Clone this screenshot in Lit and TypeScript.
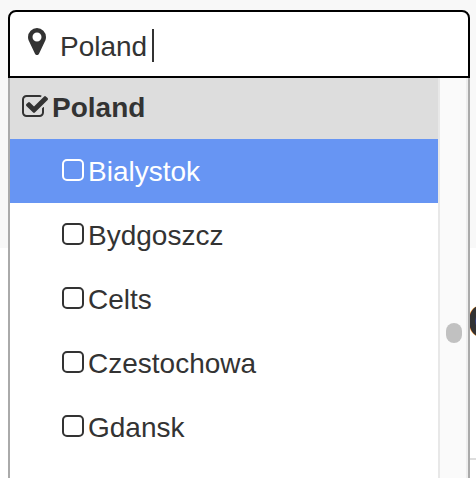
import { LitElement, html, css, svg } from "lit";
import { customElement, state } from "lit/decorators.js";

interface Place {
  name: string;
  active?: boolean;
}

const pinIcon = svg`<path d="M1152 640q0-106-75-181t-181-75-181 75-75 181 75 181 181 75 181-75 75-181zm256 0q0 109-33 179l-364 774q-16 33-47.5 52t-67.5 19-67.5-19-46.5-52l-365-774q-33-70-33-179 0-212 150-362t362-150 362 150 150 362z"/>`;

const checkIcon = svg`<path d="M1472 930v318q0 119-84.5 203.5t-203.5 84.5h-832q-119 0-203.5-84.5t-84.5-203.5v-832q0-119 84.5-203.5t203.5-84.5h832q63 0 117 25 15 7 18 23 3 17-9 29l-49 49q-10 10-23 10-3 0-9-2-23-6-45-6h-832q-66 0-113 47t-47 113v832q0 66 47 113t113 47h832q66 0 113-47t47-113v-254q0-13 9-22l64-64q10-10 23-10 6 0 12 3 20 8 20 29zm231-489l-814 814q-24 24-57 24t-57-24l-430-430q-24-24-24-57t24-57l110-110q24-24 57-24t57 24l263 263 647-647q24-24 57-24t57 24l110 110q24 24 24 57t-24 57z"/>`;

@customElement("app-root")
export class AppRoot extends LitElement {
  static styles = css`
    :host {
      display: block;
      position: relative;
      height: 100vh;
      overflow: hidden;
      background: #fff;
      color: #333;
      font: 28px/32px "Liberation Sans", Arial, sans-serif;
    }
    * {
      box-sizing: border-box;
    }
    .band {
      height: 248px;
      background: #f8f8f8;
    }
    /* page content that continues to the right, behind the picker */
    .behind {
      display: flex;
      flex-direction: column;
      align-items: flex-end;
      height: 212px;
      margin-left: 8px;
      padding-top: 48px;
      border-bottom: 2px solid #ddd;
    }
    .heading {
      width: 9px;
      margin: 0;
      font-size: 48px;
      line-height: 52px;
      font-weight: bold;
      white-space: nowrap;
    }
    .picker {
      position: absolute;
      inset: 10px 6px 0 8px;
      display: flex;
      flex-direction: column;
    }
    .field {
      display: flex;
      align-items: center;
      flex: none;
      height: 68px;
      padding: 6px 18px 0;
      border: 2px solid #000;
      border-radius: 8px 8px 0 0;
      background: #fff;
    }
    .pin {
      width: 18px;
      height: 27px;
      margin: 0 14px 12px 0;
      fill: #333;
    }
    .query {
      field-sizing: content;
      height: 36px;
      padding: 0;
      border: 0;
      outline: 0;
      background: none;
      color: inherit;
      font: inherit;
      caret-color: transparent;
    }
    .caret {
      width: 2px;
      height: 33px;
      margin: 0 0 4px 5px;
      background: #333;
    }
    .menu {
      display: flex;
      flex: 1;
      min-height: 0;
      border: solid #aaa;
      border-width: 0 2px;
      background: #fff;
    }
    .list {
      flex: 1;
      min-width: 0;
      margin: 0;
      padding: 0;
      list-style: none;
    }
    .row {
      display: flex;
      align-items: center;
      height: 64px;
      padding: 2px 0 0 52px;
    }
    .row.group {
      height: 61px;
      padding: 0 0 1px 12px;
      background: #ddd;
      font-weight: bold;
    }
    .row.active {
      background: #6795f3;
      color: #fff;
    }
    .box {
      appearance: none;
      width: 22px;
      height: 22px;
      margin: 0 4px 4px 0;
      border: 2px solid currentColor;
      border-radius: 5px;
      color: inherit;
    }
    .check {
      position: relative;
      display: flex;
      width: 26px;
      height: 22px;
      margin: 0 4px 4px 0;
    }
    .check svg {
      width: 26px;
      height: 22px;
      fill: currentColor;
    }
    .check input {
      position: absolute;
      inset: 0;
      width: 100%;
      height: 100%;
      margin: 0;
      opacity: 0;
    }
    .track {
      display: flex;
      align-items: center;
      justify-content: center;
      width: 30px;
      padding: 110px 0 0 2px;
      border: solid #e8e8e8;
      border-width: 0 2px;
      border-right-color: #eee;
      background: #fafafa;
    }
    .thumb {
      width: 16px;
      height: 20px;
      border-radius: 8px;
      background: #c1c1c1;
    }
  `;

  @state() private places: Place[] = [
    { name: "Bialystok", active: true },
    { name: "Bydgoszcz" },
    { name: "Celts" },
    { name: "Czestochowa" },
    { name: "Gdansk" },
  ];

  render() {
    return html`
      <div class="band"></div>
      <div class="behind"><h2 class="heading">C</h2></div>
      <div class="picker">
        <div class="field">
          <svg class="pin" viewBox="384 128 1024 1536" aria-hidden="true">${pinIcon}</svg>
          <input class="query" type="text" aria-label="Location" value="Poland" />
          <span class="caret"></span>
        </div>
        <div class="menu">
          <ul class="list">
            <li>
              <label class="row group">
                <span class="check">
                  <input type="checkbox" checked />
                  <svg viewBox="64 128 1664 1408" aria-hidden="true">${checkIcon}</svg>
                </span>
                Poland
              </label>
            </li>
            ${this.places.map(
              (place) => html`<li>
                <label class="row ${place.active ? "active" : ""}">
                  <input class="box" type="checkbox" />${place.name}
                </label>
              </li>`
            )}
          </ul>
          <div class="track"><div class="thumb"></div></div>
        </div>
      </div>
    `;
  }
}
